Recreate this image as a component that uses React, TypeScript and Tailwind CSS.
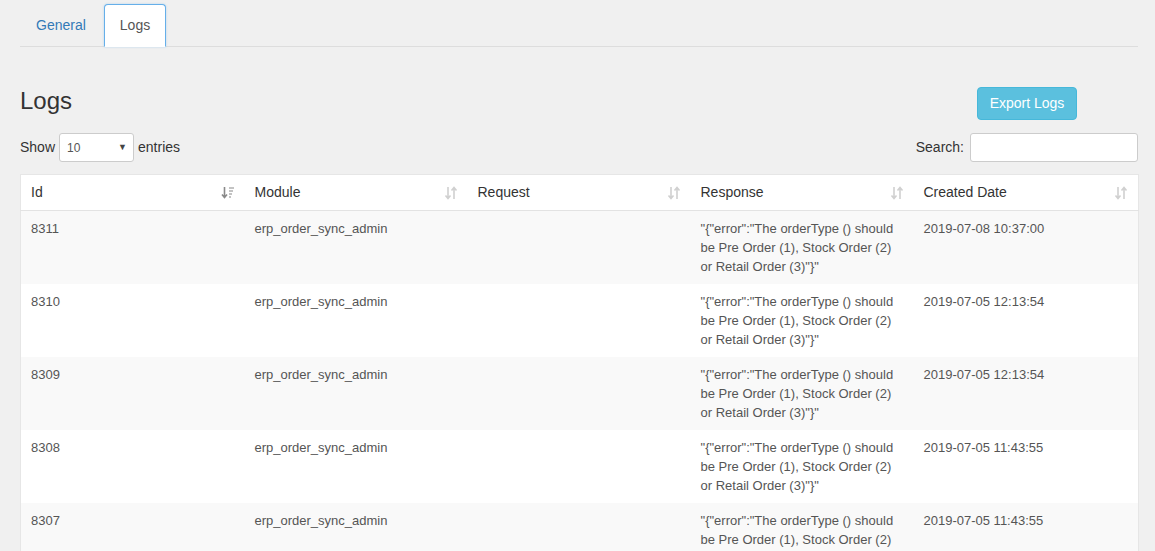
import React from "react";

const rows = [
  { id: "8311", date: "2019-07-08 10:37:00" },
  { id: "8310", date: "2019-07-05 12:13:54" },
  { id: "8309", date: "2019-07-05 12:13:54" },
  { id: "8308", date: "2019-07-05 11:43:55" },
  { id: "8307", date: "2019-07-05 11:43:55" },
];

const cols = [
  { label: "Id", w: "w-[224px]", active: true },
  { label: "Module", w: "w-[223px]" },
  { label: "Request", w: "w-[223px]" },
  { label: "Response", w: "w-[223px]" },
  { label: "Created Date", w: "w-[225px]" },
];

function SortIcon({ active }: { active?: boolean }) {
  if (active) {
    return (
      <svg width="14" height="14" viewBox="0 0 14 14" className="text-[#8a8a8a]">
        <path d="M3.5 1v10M1 8.5l2.5 3 2.5-3" stroke="currentColor" strokeWidth="1.6" fill="none" />
        <path d="M8 2h5M8 5h4M8 8h3M8 11h2" stroke="#b0b0b0" strokeWidth="1.4" />
      </svg>
    );
  }
  return (
    <svg width="14" height="14" viewBox="0 0 14 14" className="text-[#d0d0d0]">
      <path d="M4 1v11M1.5 9.5L4 12.5l2.5-3" stroke="currentColor" strokeWidth="1.6" fill="none" />
      <path d="M10 13V2M7.5 4.5L10 1.5l2.5 3" stroke="currentColor" strokeWidth="1.6" fill="none" />
    </svg>
  );
}

export default function App() {
  return (
    <div className="min-h-[551px] bg-[#f0f0f0] px-5 pt-1 font-['Liberation_Sans',Arial,sans-serif] text-[14px] text-[#333]">
      <div className="w-[1118px]">
        {/* tabs */}
        <ul className="flex border-b border-[#ddd]">
          <li className="mr-[2px]">
            <a className="-mb-px block border border-transparent px-[15px] py-[10px] leading-[20px] text-[#337ab7]">
              General
            </a>
          </li>
          <li>
            <a className="-mb-px block rounded-t-[4px] border border-b-white border-[#66afe9] bg-white px-[15px] py-[10px] leading-[21px] text-[#555] shadow-[0_0_2px_rgba(102,175,233,0.5)]">
              Logs
            </a>
          </li>
        </ul>

        {/* heading + export */}
        <div className="mt-[40px] flex items-start justify-between">
          <h2 className="mt-[1px] text-[24px] leading-[26px] font-normal text-[#333]">Logs</h2>
          <button className="mr-[61px] h-[33px] w-[100px] rounded-[4px] border border-[#46b8da] bg-[#5bc0de] text-[14px] text-white">
            Export Logs
          </button>
        </div>

        {/* controls */}
        <div className="mt-[13px] flex items-center justify-between">
          <div className="flex items-center">
            <span>Show</span>
            <div className="mx-[4px] flex h-[29px] w-[75px] items-center justify-between rounded-[3px] border border-[#ccc] bg-white pl-[7px] pr-[6px] text-[12px] text-[#555]">
              <span>10</span>
              <span className="text-[9px] text-[#444]">▼</span>
            </div>
            <span>entries</span>
          </div>
          <div className="flex items-center">
            <span>Search:</span>
            <div className="ml-[6px] h-[29px] w-[168px] rounded-[3px] border border-[#ccc] bg-white" />
          </div>
        </div>

        {/* table */}
        <table className="mt-[12px] w-full table-fixed border-collapse border border-[#e6e6e6] bg-white">
          <thead>
            <tr className="border-b border-[#e3e3e3]">
              {cols.map((c) => (
                <th key={c.label} className={`${c.w} h-[36px] px-[10px] text-left text-[14px] font-normal text-[#333]`}>
                  <div className="flex items-center justify-between">
                    <span>{c.label}</span>
                    <SortIcon active={c.active} />
                  </div>
                </th>
              ))}
            </tr>
          </thead>
          <tbody>
            {rows.map((r, i) => (
              <tr key={r.id} className={i % 2 === 0 ? "bg-[#f9f9f9]" : "bg-white"}>
                <td className="px-[10px] pt-[8px] pb-[8px] align-top text-[13px] leading-[19px] text-[#555]">{r.id}</td>
                <td className="px-[10px] pt-[8px] align-top text-[13px] leading-[19px] text-[#555]">erp_order_sync_admin</td>
                <td className="px-[10px] pt-[8px] align-top text-[13px] leading-[19px] text-[#555]"></td>
                <td className="px-[10px] pt-[8px] pb-[8px] align-top text-[13px] leading-[19px] text-[#555]">
                  "{"{"}"error":"The orderType () should be Pre Order (1), Stock Order (2) or Retail Order (3)"{"}"}"
                </td>
                <td className="px-[10px] pt-[8px] align-top text-[13px] leading-[19px] text-[#555]">{r.date}</td>
              </tr>
            ))}
          </tbody>
        </table>
      </div>
    </div>
  );
}
